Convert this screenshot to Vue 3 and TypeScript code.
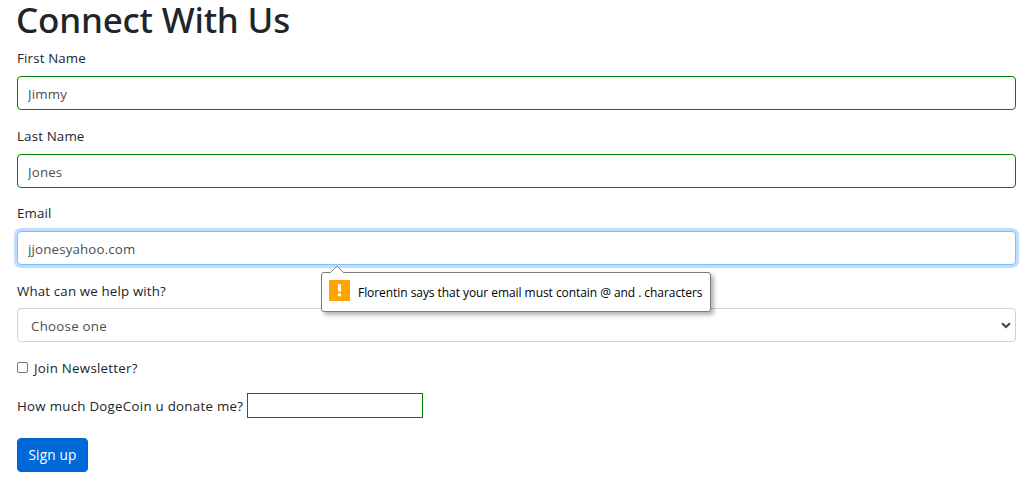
<script setup lang="ts">
import { ref } from 'vue'

interface TextField {
  id: string
  label: string
  value: string
  state: 'valid' | 'focused'
}

const fields = ref<TextField[]>([
  { id: 'first', label: 'First Name', value: 'Jimmy', state: 'valid' },
  { id: 'last', label: 'Last Name', value: 'Jones', state: 'valid' },
  { id: 'email', label: 'Email', value: 'jjonesyahoo.com', state: 'focused' },
])
const newsletter = ref(false)
const donation = ref('')
</script>

<template>
  <form class="page" novalidate @submit.prevent>
    <h1 class="title">Connect With Us</h1>

    <div v-for="field in fields" :key="field.id" class="group" :class="field.id">
      <label class="label" :for="field.id"><span>{{ field.label }}</span></label>
      <input :id="field.id" v-model="field.value" class="control" :class="field.state" type="text" spellcheck="false">
      <div v-if="field.state === 'focused'" class="bubble" role="alert">
        <svg class="arrow" width="16" height="8" viewBox="0 0 16 8">
          <path d="M1 8 L8 1 L15 8" fill="#fff" stroke="#8a8a8a" />
        </svg>
        <svg class="warn" width="21" height="21" viewBox="0 0 21 21">
          <rect width="21" height="21" rx="1" fill="#ffa400" />
          <path d="M8.8 4.3h3.4l-.4 7.5H9.2zM8.9 13.4h3.2v2.9H8.9z" fill="#fff" />
        </svg>
        <span class="message">Florentin says that your email must contain @ and . characters</span>
      </div>
    </div>

    <div class="group">
      <label class="label help" for="topic"><span>What can we help with?</span></label>
      <div class="control select" id="topic" role="combobox" tabindex="0">
        <span>Choose one</span>
        <svg width="10" height="7" viewBox="0 0 10 7">
          <path d="M1 1.2 L5 5 L9 1.2" fill="none" stroke="#40464c" stroke-width="2" />
        </svg>
      </div>
    </div>

    <label class="check">
      <input v-model="newsletter" type="checkbox">
      <span>Join Newsletter?</span>
    </label>

    <div class="donate">
      <label for="donation">How much DogeCoin u donate me?</label>
      <input id="donation" v-model="donation" type="text">
    </div>

    <button class="submit" type="submit">Sign up</button>
  </form>
</template>

<style>
body {
  background: #fff;
}
</style>

<style scoped>
.page,
.page * {
  box-sizing: border-box;
}
.page {
  display: flex;
  flex-direction: column;
  align-items: stretch;
  width: 1028px;
  height: 493px;
  padding: 0 12px 0 17px;
  color: #212529;
  font: 13.3px/22px "Open Sans", "Noto Sans", sans-serif;
  letter-spacing: 0.16px;
}
.title {
  height: 47px;
  margin: 0 0 0 -1px;
  font-family: "Noto Sans", "Open Sans", sans-serif;
  font-size: 35px;
  font-weight: 500;
  line-height: 40px;
  letter-spacing: -0.2px;
  white-space: nowrap;
}
.group {
  position: relative;
  height: 78px;
}
.group.last {
  height: 77px;
}
.group.email {
  height: 77px;
}
.label {
  display: block;
  height: 29px;
  white-space: nowrap;
}
.help {
  padding-top: 1px;
}
.control {
  display: block;
  width: 100%;
  height: 34px;
  margin: 0;
  padding: 1px 10px 0;
  border: 1px solid #ced4da;
  border-radius: 4px;
  outline: none;
  background: #fff;
  color: #495057;
  font: inherit;
  letter-spacing: inherit;
}
.valid {
  border-color: #008000;
}
.focused {
  border-color: #80bdff;
  box-shadow: 0 0 0 3px #bfdeff;
}
.select {
  display: flex;
  align-items: center;
  justify-content: space-between;
  padding: 1px 4px 0 13px;
}
.select span {
  letter-spacing: 0.26px;
}
.bubble {
  position: absolute;
  z-index: 2;
  top: 70px;
  left: 304px;
  display: flex;
  align-items: center;
  width: 390px;
  height: 40px;
  padding-left: 7px;
  border: 1px solid #7c7c7c;
  border-radius: 3px;
  background: #fff;
  box-shadow: 3px 3px 4px rgba(0, 0, 0, 0.3);
  color: #000;
  font-size: 12px;
  letter-spacing: -0.06px;
}
.arrow {
  position: absolute;
  top: -8px;
  left: 7px;
}
.warn {
  flex: none;
  margin: -4px 8px 0 0;
}
.message {
  padding-top: 2px;
  white-space: nowrap;
}
.check {
  display: flex;
  align-items: center;
  height: 22px;
  gap: 6px;
  letter-spacing: 0.26px;
}
.check input {
  appearance: none;
  width: 11px;
  height: 11px;
  margin: -2px 0 0;
  border: 1px solid #767676;
  border-radius: 2px;
  background: #fff;
}
.donate {
  display: flex;
  align-items: center;
  height: 25px;
  margin-top: 14px;
}
.donate label {
  width: 230px;
  letter-spacing: 0.27px;
  white-space: nowrap;
}
.donate input {
  width: 176px;
  height: 25px;
  border: 1px solid #008000;
  outline: none;
}
.submit {
  align-self: flex-start;
  width: 71px;
  height: 34px;
  margin: 20px 0 0;
  padding: 0;
  border: 1px solid #0062cc;
  border-radius: 4px;
  background: #0069d9;
  color: #fff;
  font: inherit;
  font-size: 13.6px;
  letter-spacing: 0.2px;
  white-space: nowrap;
}
</style>
